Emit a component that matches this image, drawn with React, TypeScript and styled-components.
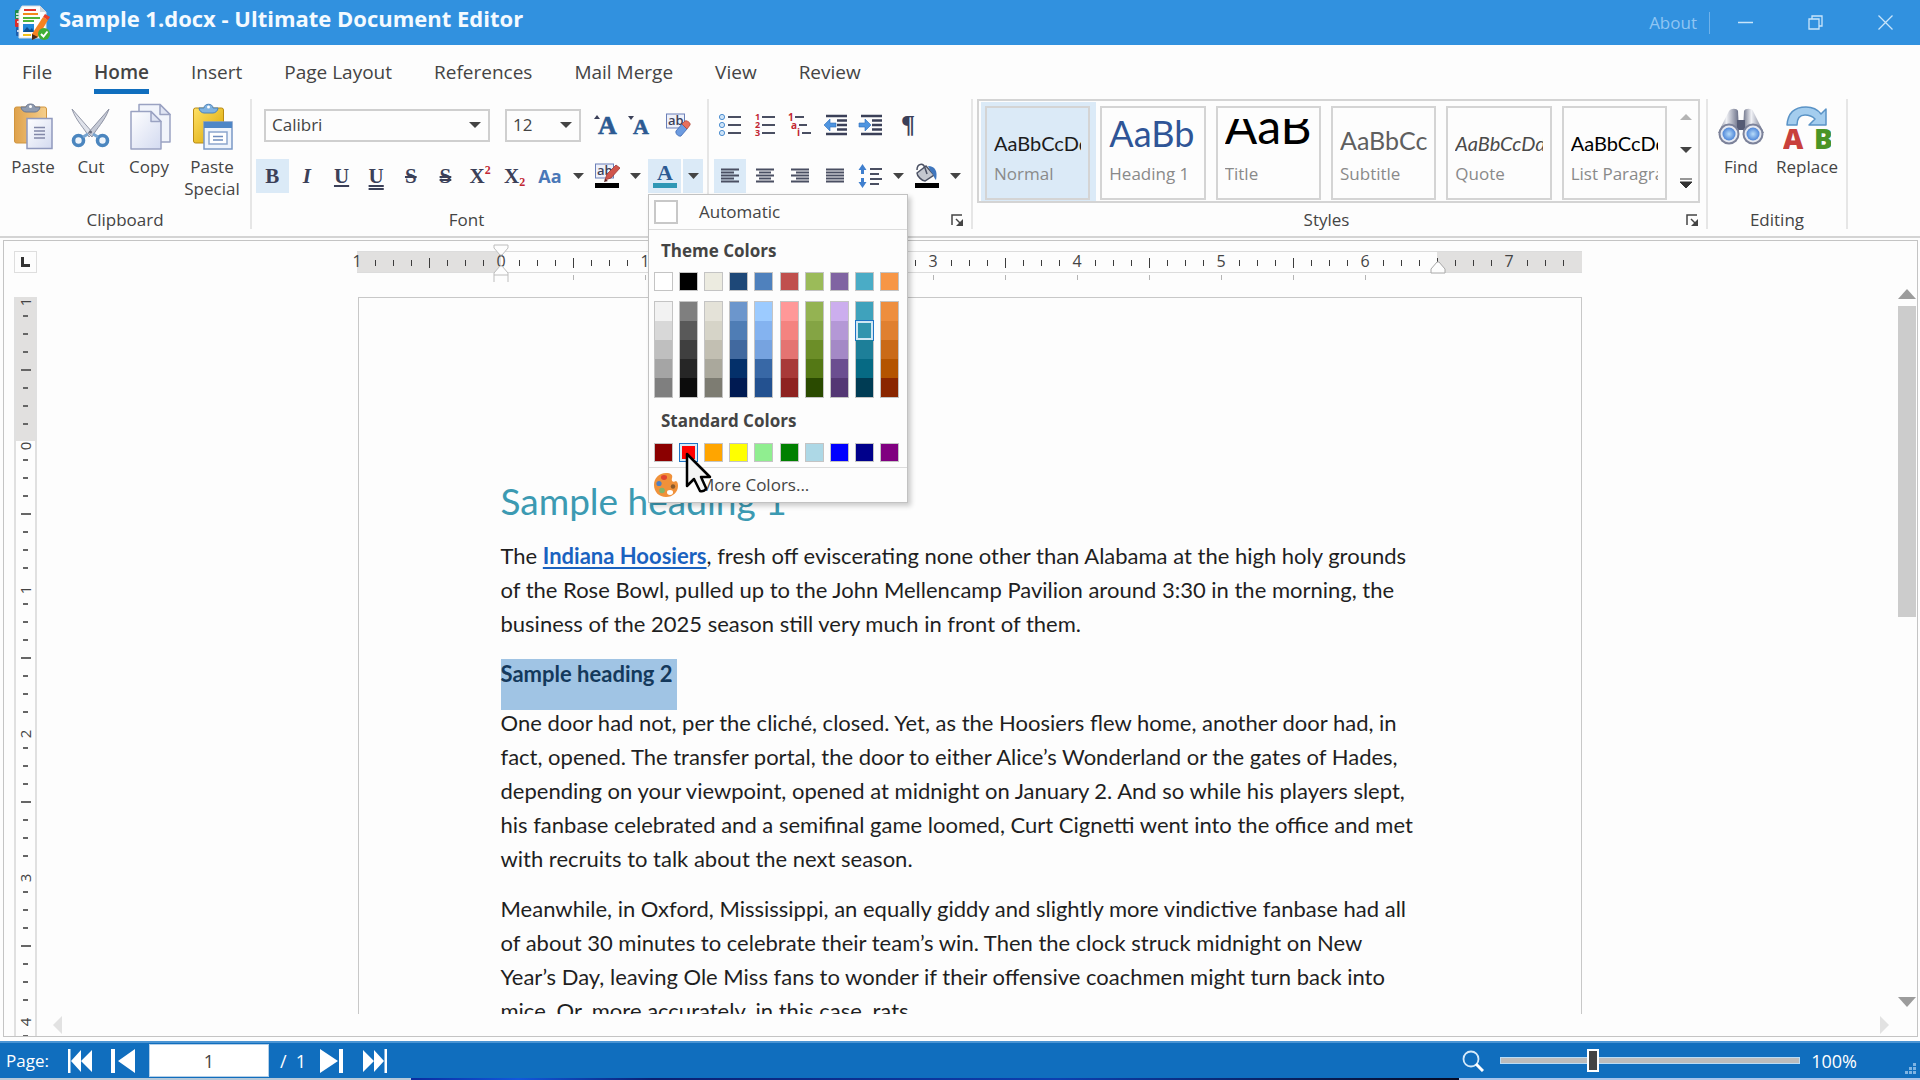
import React from "react";
import styled, { createGlobalStyle } from "styled-components";

const ui = `"Open Sans", "Noto Sans", sans-serif`;
const doc = `Lato, "Open Sans", sans-serif`;
const serif = `"Liberation Serif", serif`;

const color = {
  title: "#3191df",
  accent: "#106ebe",
  text: "#444444",
  line: "#d4d4d4",
  soft: "#e6e6e6",
  active: "#dbeaf7",
  icon: "#3b4058",
};

const GlobalStyle = createGlobalStyle`
  * { box-sizing: border-box; }
  body { margin: 0; background: #fdfdfd; overflow: hidden; }
  button, select, input { font: inherit; color: inherit; margin: 0; padding: 0; border: 0; background: none; }
  svg { display: block; flex: none; }
`;

const Window = styled.div`
  display: flex;
  flex-direction: column;
  height: 100vh;
  font-family: ${ui};
  font-size: 17px;
  line-height: 22px;
  color: ${color.text};
  white-space: nowrap;
`;

/* ---------- title bar ---------- */

const TitleBar = styled.header`
  display: flex;
  align-items: center;
  height: 45px;
  flex: none;
  padding-left: 14px;
  background: ${color.title};
`;

const AppTitle = styled.h1`
  flex: 1;
  margin: 0;
  padding: 0 0 10px 9px;
  font-size: 22px;
  line-height: 28px;
  font-weight: 700;
  color: #f4faff;
`;

const AboutButton = styled.button`
  height: 22px;
  padding: 0 12px;
  border-right: 1px solid #6fb2ea;
  color: #8fc5f3;
`;

const CaptionButton = styled.button`
  display: grid;
  place-items: center;
  width: 70px;
  height: 44px;
`;

/* ---------- tabs ---------- */

const TabBar = styled.nav`
  display: flex;
  gap: 42px;
  height: 50px;
  flex: none;
  padding: 11px 22px 0;
  font-size: 19px;
`;

const Tab = styled.button<{ $current?: boolean }>`
  height: 38px;
  padding-bottom: 2px;
  border-bottom: 5px solid ${(p) => (p.$current ? color.accent : "transparent")};
  font-weight: ${(p) => (p.$current ? 600 : 400)};
`;

/* ---------- ribbon ---------- */

const Ribbon = styled.div`
  display: flex;
  flex: none;
  padding: 4px 0 7px;
  border-bottom: 2px solid ${color.line};
`;

const Group = styled.section<{ $width: number }>`
  display: flex;
  flex-direction: column;
  width: ${(p) => p.$width}px;
  height: 130px;
  border-right: 2px solid ${color.soft};
`;

const GroupBody = styled.div<{ $pad?: string }>`
  flex: 1;
  padding: ${(p) => p.$pad ?? "0"};
`;

const GroupFoot = styled.footer`
  display: flex;
  align-items: center;
  height: 18px;
  line-height: 18px;
`;

const GroupName = styled.span`
  flex: 1;
  text-align: center;
`;

const Launcher = styled.button`
  width: 26px;
  height: 14px;
  padding-left: 6px;
`;

const BigRow = styled.div`
  display: flex;
  align-items: flex-start;
`;

const BigButton = styled.button<{ $width: number }>`
  display: flex;
  flex-direction: column;
  align-items: center;
  gap: 5px;
  width: ${(p) => p.$width}px;
  white-space: normal;
`;

const ToolRow = styled.div<{ $gap: number; $top?: number; $left?: number }>`
  display: flex;
  align-items: center;
  gap: ${(p) => p.$gap}px;
  height: 34px;
  margin-top: ${(p) => p.$top ?? 0}px;
  padding-left: ${(p) => p.$left ?? 0}px;
`;

const SizeTools = styled.div`
  display: flex;
  margin-left: -6px;
`;

const ToggleGrid = styled.div`
  display: grid;
  grid-template-columns: repeat(8, 1fr);
  column-gap: 2px;
  width: 275px;
`;

const Tool = styled.button<{ $active?: boolean; $width?: number }>`
  display: grid;
  place-items: center;
  width: ${(p) => (p.$width ? p.$width + "px" : "auto")};
  height: 34px;
  background: ${(p) => (p.$active ? color.active : "transparent")};
`;

const Glyph = styled.span<{ $italic?: boolean; $line?: string; $big?: boolean }>`
  font: ${(p) => (p.$italic ? "italic" : "normal")} bold ${(p) => (p.$big ? 26 : 21)}px/24px ${serif};
  color: ${color.icon};
  text-decoration: ${(p) => p.$line ?? "none"};
  text-decoration-thickness: ${(p) => (p.$line?.includes("double") ? "auto" : "2px")};
  text-underline-offset: 2px;
`;

const Script = styled.span<{ $low?: boolean }>`
  font-size: 12px;
  line-height: 10px;
  color: #c22733;
  vertical-align: ${(p) => (p.$low ? "-3px" : "9px")};
`;

const CaseGlyph = styled.span`
  font: bold 18px/24px "Open Sans", sans-serif;
  color: #4a78b8;
`;

const Split = styled.div`
  position: relative;
  display: flex;
  gap: 2px;
`;

const Combo = styled.label<{ $width: number }>`
  display: grid;
  align-items: center;
  width: ${(p) => p.$width}px;
  height: 33px;
  border: 2px solid #cfcfcf;

  select, svg { grid-area: 1 / 1; }
  select { appearance: none; height: 29px; padding-left: 6px; outline: none; font-size: 17px; }
  svg { justify-self: end; margin-right: 7px; pointer-events: none; }
`;

/* ---------- style gallery ---------- */

const Gallery = styled.div`
  display: flex;
  width: 723px;
  height: 104px;
  margin-left: 4px;
  border: 2px solid ${color.line};
`;

const GalleryItems = styled.div`
  flex: 1;
  display: grid;
  grid-template-columns: repeat(6, minmax(0, 1fr));
  padding: 1px 0 0 2px;
`;

const StyleCard = styled.button<{ $active?: boolean }>`
  padding: 4px 6px 1px 4px;
  background: ${(p) => (p.$active ? color.active : "transparent")};
  text-align: left;
`;

const StyleFrame = styled.span`
  display: block;
  height: 94px;
  padding: 11px 7px 0;
  border: 2px solid ${color.line};
`;

const Sample = styled.span<{ $size: number; $color: string; $italic?: boolean }>`
  display: flex;
  align-items: flex-end;
  height: 36px;
  overflow: hidden;
  font-family: ${doc};
  font-size: ${(p) => p.$size}px;
  line-height: 1.2;
  font-style: ${(p) => (p.$italic ? "italic" : "normal")};
  color: ${(p) => p.$color};
`;

const StyleName = styled.span`
  display: block;
  margin-top: 8px;
  overflow: hidden;
  color: #8a8a8a;
`;

const GalleryNav = styled.div`
  display: flex;
  flex-direction: column;
  width: 25px;
  padding-bottom: 2px;

  button { flex: 1; display: grid; place-items: center; }
`;

/* ---------- colour menu ---------- */

const Menu = styled.div`
  position: absolute;
  z-index: 5;
  left: 0;
  top: 35px;
  width: 260px;
  border: 1px solid #c2c2c2;
  background: #fdfdfd;
  box-shadow: 3px 3px 5px rgba(0, 0, 0, 0.2);
`;

const MenuRow = styled.button<{ $rule: "top" | "bottom" }>`
  display: flex;
  align-items: center;
  gap: 21px;
  width: 100%;
  height: 35px;
  padding-left: 5px;
  border-${(p) => p.$rule}: 1px solid #dcdcdc;
`;

const AutoBox = styled.span`
  width: 24px;
  height: 24px;
  border: 2px solid #c8c8c8;
  background: #ffffff;
`;

const MenuTitle = styled.h2<{ $height: number }>`
  margin: 0;
  padding-left: 12px;
  height: ${(p) => p.$height}px;
  line-height: ${(p) => p.$height}px;
  font-size: 17px;
  font-weight: 700;
`;

const Swatches = styled.div<{ $below: number }>`
  display: flex;
  justify-content: space-between;
  padding: 0 8px 0 5px;
  margin-bottom: ${(p) => p.$below}px;
`;

const Swatch = styled.button<{ $fill: string; $picked?: boolean }>`
  width: 19px;
  height: 19px;
  border: ${(p) => (p.$picked ? "1px solid #1f74c4" : "1px solid #c4c4c4")};
  box-shadow: ${(p) => (p.$picked ? "inset 0 0 0 2px #d7ebf7" : "none")};
  background: ${(p) => p.$fill};
`;

const Shades = styled.div`
  display: flex;
  flex-direction: column;
  width: 19px;
  border: 1px solid #c4c4c4;
`;

const Shade = styled.button<{ $fill: string; $picked?: boolean }>`
  height: 19px;
  background: ${(p) => p.$fill};
  outline: ${(p) => (p.$picked ? "1px solid #1f74c4" : "none")};
  box-shadow: ${(p) => (p.$picked ? "inset 0 0 0 2px #cfe6f3" : "none")};
`;

const Pointer = styled.svg`
  position: absolute;
  left: 36px;
  top: 257px;
`;

/* ---------- workspace ---------- */

const Workspace = styled.main`
  display: flex;
  flex: 1;
  min-height: 0;
  margin: 2px 2px 4px 3px;
  padding: 0 1px 0 10px;
  border: 1px solid #c4c4c4;
  overflow: hidden;
`;

const Side = styled.div`
  display: flex;
  flex-direction: column;
  gap: 24px;
  width: 23px;
  margin-right: 4px;
  padding-top: 10px;
`;

const TabKind = styled.button`
  display: grid;
  place-items: center;
  flex: none;
  height: 22px;
  border: 1px solid #dedede;
`;

const VRuler = styled.div`
  flex: 1;
  min-height: 0;
  overflow: hidden;
  border: solid #e0e0e0;
  border-width: 0 2px;
  background: linear-gradient(#e1e0df 144px, #fdfdfd 144px);
`;

const VTicks = styled.div`
  margin-top: -8px;
`;

const VCell = styled.div`
  display: grid;
  place-items: center;
  height: 18px;
`;

const VNumber = styled.span`
  padding-right: 8px;
  font-size: 15px;
  line-height: 18px;
  transform: rotate(-90deg);
`;

const VTick = styled.i<{ $long?: boolean }>`
  width: ${(p) => (p.$long ? 10 : 5)}px;
  height: 2px;
  background: #666666;
`;

const Center = styled.div`
  flex: 1;
  display: flex;
  flex-direction: column;
  align-items: center;
  padding-top: 10px;
  min-width: 0;
`;

const HRuler = styled.div`
  position: relative;
  flex: none;
  width: 1225px;
  height: 46px;
`;

const HScale = styled.div`
  display: flex;
  height: 22px;
  border: solid #dcdcdc;
  border-width: 1px 0;
  background: linear-gradient(90deg, #e1e0df 144px, #fdfdfd 144px, #fdfdfd 1080px, #e1e0df 1080px);
`;

const HTicks = styled.div`
  display: flex;
  margin-left: -9px;
`;

const HCell = styled.div`
  display: grid;
  place-items: center;
  width: 18px;
  height: 18px;
`;

const HNumber = styled.span`
  font-size: 16px;
  line-height: 18px;
`;

const HTick = styled.i<{ $long?: boolean }>`
  width: 1px;
  height: ${(p) => (p.$long ? 10 : 6)}px;
  margin-top: 4px;
  background: #3c3c3c;
`;

const TabStops = styled.div`
  display: flex;
  padding: 2px 0 0 145px;

  i { width: 72px; height: 5px; border-right: 1px solid #b4b4b4; }
`;

const Indent = styled.svg<{ $left: number; $top: number }>`
  position: absolute;
  left: ${(p) => p.$left}px;
  top: ${(p) => p.$top}px;
`;

const Viewport = styled.div`
  flex: 1;
  min-height: 0;
  overflow: hidden;
`;

const Page = styled.article`
  width: 1224px;
  height: 1584px;
  padding: 182px 100px 0 142px;
  border: 1px solid #c8c8c8;
  font-family: ${doc};
  font-size: 22px;
  line-height: 34px;
  color: #1f1f1f;

  a { color: #1a62c0; font-weight: 700; text-decoration-thickness: 2px; text-underline-offset: 3px; }
`;

const Heading1 = styled.h1`
  margin: 0 0 17px;
  font-size: 37px;
  line-height: 42px;
  font-weight: 400;
  color: #3c9ab2;
`;

const Paragraph = styled.p`
  margin: 0 0 16px;
`;

const Line = styled.span`
  display: block;
`;

const Heading2 = styled.h2`
  width: fit-content;
  height: 51px;
  margin: 18px 0 -4px;
  padding-right: 4px;
  background: #a0c4e4;
  font-size: 22px;
  line-height: 29px;
  font-weight: 700;
  color: #14395c;
`;

const HScroll = styled.div`
  display: flex;
  justify-content: space-between;
  align-items: center;
  align-self: stretch;
  height: 22px;
  padding: 0 9px 0 12px;
`;

const VScroll = styled.div`
  display: flex;
  flex-direction: column;
  width: 18px;
  padding: 48px 0 29px;
`;

const ScrollTrack = styled.div`
  flex: 1;
  padding: 7px 0;
`;

const ScrollThumb = styled.div`
  height: 45.5%;
  background: #cccccc;
`;

/* ---------- status bar ---------- */

const StatusBar = styled.footer`
  display: flex;
  align-items: center;
  flex: none;
  height: 37px;
  border-top: 2px solid #4b95d4;
  background: ${color.accent};
  color: #ffffff;
  font-size: 18px;
`;

const StatusText = styled.span<{ $pad: string }>`
  padding: ${(p) => p.$pad};
`;

const PageLabel = styled.label`
  padding: 0 18px 0 6px;
  font-size: 17px;
`;

const NavButton = styled.button<{ $gap: number }>`
  width: 26px;
  height: 26px;
  margin-right: ${(p) => p.$gap}px;
`;

const PageInput = styled.input`
  width: 120px;
  height: 33px;
  border: 1px solid #b4cfe8;
  background: #ffffff;
  color: ${color.text};
  text-align: center;
`;

const Spacer = styled.div`
  flex: 1;
`;

const ZoomRange = styled.input`
  appearance: none;
  width: 300px;
  height: 24px;
  margin: 0 11px 0 16px;

  &::-webkit-slider-runnable-track {
    height: 7px;
    border: 1px solid #b9dcf6;
    background: #bcbcbc;
  }
  &::-webkit-slider-thumb {
    appearance: none;
    width: 12px;
    height: 23px;
    margin-top: -9px;
    border: 2px solid #ffffff;
    background: #444444;
  }
`;

const Grip = styled.svg`
  align-self: flex-end;
  margin: 0 4px 4px 0;
`;

const Desktop = styled.div`
  flex: none;
  height: 2px;
  background: linear-gradient(90deg, #b7c9d9 0 21.4%, #0a2a9c 21.4%, #1257dd 27%, #0a1f70 34%, #0d3fb0 55%, #050a24 76%, #a9c4ea 76%);
`;

/* ---------- icons ---------- */

const Caret = ({ fill = "#444444", w = 10, h = 6, up = false }) => (
  <svg width={w} height={h} viewBox="0 0 10 6" preserveAspectRatio="none">
    <path d={up ? "M0 6H10L5 0Z" : "M0 0H10L5 6Z"} fill={fill} />
  </svg>
);

const AppLogo = () => (
  <svg width="36" height="36" viewBox="0 0 36 36">
    <rect x="1" y="5" width="8" height="9" rx="1" fill="#1d8a4a" />
    <rect x="1" y="14" width="8" height="8" rx="1" fill="#d92b2b" />
    <rect x="2" y="22" width="9" height="9" rx="1" fill="#1d5fae" />
    <path d="M2 9h4M2 12h4M3 17h3M3 26h4" stroke="#fff" strokeWidth="1.3" />
    <path d="M8 1h18l6 6v26H5V6z" fill="#fdfdfd" stroke="#d8dde2" />
    <path d="M26 1l6 6h-6z" fill="#cfd6dc" />
    <path d="M10 5h12" stroke="#e0332c" strokeWidth="2" />
    <path d="M9 9h15" stroke="#f28a1c" strokeWidth="2" />
    <path d="M9 13h17M9 16h11" stroke="#4fb53c" strokeWidth="2" />
    <rect x="9" y="19" width="11" height="8" fill="#2389d8" />
    <path d="M9 27l4-5 3 3 2-2 2 4z" fill="#0d4e8f" />
    <path d="M9 30h8" stroke="#f2c21c" strokeWidth="2" />
    <path d="M18 29L29 12l5 3-10 17-6 3z" fill="#f58220" />
    <path d="M29 12l2-3 5 3-2 3z" fill="#e8402a" />
    <path d="M18 29l6 3-6 3z" fill="#4a2a18" />
    <circle cx="30" cy="29" r="6" fill="#3fae35" />
    <path d="M27 29l2.500 2.500 4-5" fill="none" stroke="#fff" strokeWidth="2" />
  </svg>
);

const PasteIcon = () => (
  <svg width="48" height="48" viewBox="0 0 48 48">
    <defs>
      <linearGradient id="board" x2="1"><stop stopColor="#dfa24c" /><stop offset="1" stopColor="#f6cf8c" /></linearGradient>
      <linearGradient id="sheet" x2="1" y2="1"><stop stopColor="#ffffff" /><stop offset="1" stopColor="#d3daf0" /></linearGradient>
    </defs>
    <rect x="5.500" y="4" width="32" height="36" rx="2" fill="url(#board)" stroke="#d0953f" />
    <path d="M12 4h5c0-4 9-4 9 0h5c0 3-3 5-5 5h-9c-2 0-5-2-5-5z" fill="#8f9bb0" stroke="#6d7890" />
    <circle cx="21.500" cy="3.500" r="1.500" fill="#fff" />
    <rect x="18" y="15.500" width="25" height="30" fill="url(#sheet)" stroke="#9099bd" strokeWidth="1.500" />
    <path d="M25 24.500h11M25 28h11M25 31.500h11M25 35h11" stroke="#8288a8" strokeWidth="1.500" />
  </svg>
);

const CutIcon = () => (
  <svg width="48" height="48" viewBox="0 0 48 48">
    <path d="M5 6l21 24-4 4C18 26 9 18 5 6z" fill="#dfe2ea" stroke="#9398a8" />
    <path d="M42 6L21 30l4 4C29 26 38 18 42 6z" fill="#c6cad6" stroke="#8d92a3" />
    <circle cx="23.500" cy="29" r="1.500" fill="#676d80" />
    <circle cx="11.500" cy="37.500" r="5" fill="#eef4fb" stroke="#4b86bf" strokeWidth="3.600" />
    <circle cx="35.500" cy="37.500" r="5" fill="#eef4fb" stroke="#4b86bf" strokeWidth="3.600" />
    <path d="M16 34l5-3M31 34l-5-3" stroke="#79a5d0" strokeWidth="3" />
  </svg>
);

const CopyIcon = () => (
  <svg width="48" height="48" viewBox="0 0 48 48">
    <g stroke="#9aa2c2" strokeWidth="1.500" strokeLinejoin="round">
      <path d="M14 1.500h21l10 10V39H14z" fill="#f1f4fb" />
      <path d="M35 1.500v10h10z" fill="#dfe4f3" />
      <path d="M6 8.500h20l10 10V46H6z" fill="url(#sheet)" />
      <path d="M26 8.500v10h10z" fill="#dfe4f3" />
    </g>
  </svg>
);

const PasteSpecialIcon = () => (
  <svg width="48" height="48" viewBox="0 0 48 48">
    <defs>
      <linearGradient id="gold" x2="1" y2="1"><stop stopColor="#ffe166" /><stop offset="1" stopColor="#d9a400" /></linearGradient>
    </defs>
    <rect x="5.500" y="5" width="30" height="35" rx="2" fill="url(#gold)" stroke="#b98a12" />
    <path d="M11 5h5c0-5 9-5 9 0h5c0 3-3 5-5 5h-9c-2 0-5-2-5-5z" fill="#7fb2e0" stroke="#4d82b8" />
    <circle cx="20.500" cy="4" r="1.500" fill="#fff" />
    <rect x="16" y="19" width="28" height="27" fill="#eef4fc" stroke="#7a98c6" strokeWidth="1.500" />
    <rect x="16" y="19" width="28" height="6" fill="#4e86c6" />
    <rect x="21" y="29" width="18" height="12" fill="#fff" stroke="#8da6cd" strokeWidth="1.500" />
    <path d="M25 33.500h10M25 37h10" stroke="#6f8dbd" strokeWidth="1.500" />
  </svg>
);

const FindIcon = () => (
  <svg width="48" height="48" viewBox="0 0 48 48">
    <defs>
      <linearGradient id="tube" x2="1"><stop stopColor="#6d7389" /><stop offset=".4" stopColor="#f0f1f5" /><stop offset="1" stopColor="#666c84" /></linearGradient>
      <radialGradient id="lens"><stop stopColor="#b8dcfa" /><stop offset="1" stopColor="#4e86d8" /></radialGradient>
    </defs>
    <path d="M12 8c2-3 8-3 9 0l1 20-21 2z" fill="url(#tube)" />
    <path d="M27 8c1-3 8-3 9 0l11 22-21-2z" fill="url(#tube)" />
    <rect x="20" y="17" width="8" height="10" fill="#555b74" />
    <circle cx="12" cy="31" r="10.500" fill="#7c829a" />
    <circle cx="12" cy="31" r="8.500" fill="#e6e9f1" />
    <circle cx="12" cy="31" r="6.500" fill="url(#lens)" />
    <circle cx="36" cy="31" r="10.500" fill="#7c829a" />
    <circle cx="36" cy="31" r="8.500" fill="#e6e9f1" />
    <circle cx="36" cy="31" r="6.500" fill="url(#lens)" />
  </svg>
);

const ReplaceIcon = () => (
  <svg width="48" height="48" viewBox="0 0 48 48">
    <path d="M4 22C5 9 13 4 23 4c7 0 12 3 15 7l5-5v16H26l6-6c-3-3-6-4-10-4-6 0-8 4-8 10z" fill="#a4cdee" stroke="#5a93c6" strokeWidth="1.500" strokeLinejoin="round" />
    <text x="0" y="46" fontFamily="Open Sans" fontWeight="800" fontSize="28" fill="#c8403c">A</text>
    <text x="31" y="46" fontFamily="Open Sans" fontWeight="800" fontSize="28" fill="#4a9426">B</text>
  </svg>
);

const SizeGlyph = ({ size, up }: { size: number; up?: boolean }) => (
  <svg width="26" height="24" viewBox="0 0 26 24">
    <path d={up ? "M0 6h6L3 2z" : "M0 3h6L3 7z"} fill="#3b4058" />
    <text x={up ? 4 : 5} y="21" fontFamily="Liberation Serif" fontWeight="bold" fontSize={size} fill="#2c5a92" stroke="#2c5a92" strokeWidth=".6">A</text>
  </svg>
);

const AbCard = ({ pen }: { pen?: boolean }) => (
  <svg width="26" height="26" viewBox="0 0 26 26">
    <rect x="1.500" y={pen ? 1 : 2} width="18" height="14" fill="#eef1fa" stroke="#6a7fb8" />
    <text x="3" y={pen ? 12 : 13} fontFamily="Open Sans" fontWeight="600" fontSize="13" fill="#3b4058">ab</text>
    {pen ? (
      <>
        <path d="M11 17l2-6 9-9 4 3-9 10z" fill="#d0554c" stroke="#9d3a36" strokeWidth=".8" />
        <path d="M10 19l1-3 3 2z" fill="#5a2020" />
        <rect x="1" y="20" width="24" height="5" fill="#000" />
      </>
    ) : (
      <>
        <path d="M11 19l6-7 5 5-6 7c-2 1-6-2-5-5z" fill="#6c9be0" stroke="#3d67b0" strokeWidth=".8" />
        <path d="M17 12l3-3c2-1 6 2 5 4l-3 4z" fill="#e8705c" stroke="#b04a3c" strokeWidth=".8" />
      </>
    )}
  </svg>
);

const FontColorIcon = () => (
  <svg width="26" height="26" viewBox="0 0 26 26">
    <text x="13" y="17" textAnchor="middle" fontFamily="Liberation Serif" fontWeight="bold" fontSize="22" fill="#2c5a92">A</text>
    <rect x="1" y="20" width="24" height="5" fill="#2f97b5" />
  </svg>
);

const BucketIcon = () => (
  <svg width="26" height="26" viewBox="0 0 26 26">
    <path d="M3 10l9-7 8 9-9 6c-3 0-8-5-8-8z" fill="#c3c7cf" stroke="#4c5264" strokeWidth="1.500" />
    <path d="M3 7c0-6 6-8 8-2l2 6" fill="none" stroke="#4c5264" strokeWidth="1.500" />
    <path d="M14 3c7 0 10 5 8 14-3-3-2-6-5-8z" fill="#3f76bd" />
    <rect x="1" y="20" width="24" height="5" fill="#000" />
  </svg>
);

const rows = (ys: number[], x1: number, x2: number) => ys.map((y) => `M${x1} ${y}H${x2}`).join("");

const BulletIcon = () => (
  <svg width="24" height="24" viewBox="0 0 24 24">
    {[4, 12, 20].map((y) => <circle key={y} cx="4" cy={y} r="2.600" fill="#cfe4f8" stroke="#4f8fd0" />)}
    <path d={rows([4, 12, 20], 10, 23)} stroke="#4a4f62" strokeWidth="2" />
  </svg>
);

const numStyle = { fontFamily: "Open Sans", fontWeight: 700, fill: "#c22733" };

const NumberIcon = () => (
  <svg width="24" height="24" viewBox="0 0 24 24">
    <g {...numStyle} fontSize="9">
      <text x="2" y="7">1</text><text x="2" y="15">2</text><text x="2" y="23">3</text>
    </g>
    <path d={rows([4, 12, 20], 9, 22)} stroke="#4a4f62" strokeWidth="2" />
  </svg>
);

const MultiIcon = () => (
  <svg width="24" height="24" viewBox="0 0 24 24">
    <g {...numStyle} fontSize="10">
      <text x="0" y="8">1</text><text x="3" y="16">a</text><text x="9" y="23">i</text>
    </g>
    <path d="M7 4H16M11 12H19M14 20H23" stroke="#4a4f62" strokeWidth="2" />
  </svg>
);

const IndentIcon = ({ out }: { out?: boolean }) => (
  <svg width="24" height="24" viewBox="0 0 24 24">
    <path d="M3 3H24M14 7.500H24M14 12H24M14 16.500H24M3 21H24" stroke="#3b4058" strokeWidth="2.400" />
    <path d={out ? "M1 12l6-6v4h6v4H7v4z" : "M13 12L7 6v4H1v4h6v4z"} fill="#4f95e0" stroke="#2b6cb8" strokeWidth=".6" />
  </svg>
);

const AlignIcon = ({ kind }: { kind: "left" | "center" | "right" | "full" }) => {
  const short = kind === "left" ? [3, 16] : kind === "right" ? [8, 21] : kind === "center" ? [6, 18] : [3, 21];
  return (
    <svg width="24" height="24" viewBox="0 0 24 24">
      <path d={rows([5.5, 11.5, 17.5], 3, 21) + rows([8.5, 14.5], short[0], short[1])} stroke="#4a4f62" strokeWidth="1.800" />
    </svg>
  );
};

const SpacingIcon = () => (
  <svg width="24" height="24" viewBox="0 0 24 24">
    <path d="M4.500 0l4 6H6v4H3V6H.5zM4.500 24l4-6H6v-4H3v4H.5z" fill="#3f7fce" />
    <path d="M12 5H24M12 10H21M12 15H24M12 20H21" stroke="#4a4f62" strokeWidth="2" />
  </svg>
);

const LauncherIcon = () => (
  <svg width="12" height="12" viewBox="0 0 12 12">
    <path d="M1 11V1h10" fill="none" stroke="#444" strokeWidth="1.500" />
    <path d="M5 5l4 4" stroke="#444" strokeWidth="1.500" />
    <path d="M12 5v7H5z" fill="#444" />
  </svg>
);

const PaletteIcon = () => (
  <svg width="24" height="24" viewBox="0 0 24 24">
    <path d="M12 0c5 0 7 2 6 5s1 5 4 3c2 1 2 4 2 5 0 6-5 11-12 11S0 19 0 12 5 0 12 0z" fill="#f0913a" />
    <ellipse cx="10" cy="4.500" rx="3" ry="2.400" fill="#e0452f" />
    <circle cx="5" cy="10.500" r="2.600" fill="#4f7fc0" />
    <circle cx="8" cy="17.500" r="2.800" fill="#84b468" />
    <ellipse cx="16" cy="19.500" rx="3" ry="2.400" fill="#fff" />
    <circle cx="19" cy="13.500" r="2.200" fill="#8a5a2c" />
  </svg>
);

const first = "M1 1h2.500v24H1zM14 2v22L4 13zM25 2v22L14 13z";
const last = "M25 1h-2.500v24H25zM12 2v22l10-11zM1 2v22l11-11z";
const prev = "M1 1h4v24H1zM25 1v24L8 13z";
const next = "M24 1h-4v24h4zM1 1v24l18-12z";

/* ---------- data ---------- */

const themeBase = ["#ffffff", "#000000", "#ecebe0", "#1e4878", "#4f81bd", "#c0504d", "#9bbb59", "#8064a2", "#4aacc6", "#f79646"];

const themeShades = [
  ["#f2f2f2", "#d8d8d8", "#bfbfbf", "#a5a5a5", "#7f7f7f"],
  ["#7f7f7f", "#595959", "#3f3f3f", "#262626", "#0c0c0c"],
  ["#e4e2d8", "#d6d4c8", "#c2bfb2", "#aaa89c", "#7d7c72"],
  ["#6c96cc", "#4f7db5", "#41699f", "#04306a", "#001a52"],
  ["#9ccbff", "#84b3f0", "#76a3e0", "#3868a6", "#235190"],
  ["#ff9898", "#f48380", "#e47472", "#a83a38", "#8e2220"],
  ["#94b352", "#84a444", "#6c8e28", "#547815", "#2a4a00"],
  ["#ccaeee", "#b498d6", "#a489c6", "#6b4e90", "#543774"],
  ["#3fa2bc", "#3094ae", "#1d7f99", "#066a84", "#003c54"],
  ["#ee8e3e", "#e08030", "#ca6a18", "#b45400", "#8a2600"],
];

const standard = ["#8b0000", "#ff0000", "#ffa500", "#ffff00", "#90ee90", "#008000", "#add8e6", "#0000ff", "#00008b", "#800080"];

const tabs = ["File", "Home", "Insert", "Page Layout", "References", "Mail Merge", "View", "Review"];

const cards = [
  { name: "Normal", text: "AaBbCcDd", size: 20, color: "#1c1c1c" },
  { name: "Heading 1", text: "AaBb", size: 36, color: "#2f5597" },
  { name: "Title", text: "AaBb", size: 48, color: "#000000" },
  { name: "Subtitle", text: "AaBbCc", size: 25, color: "#5f5f5f" },
  { name: "Quote", text: "AaBbCcDd", size: 20, color: "#4a4a4a", italic: true },
  { name: "List Paragraph", text: "AaBbCcDd", size: 20, color: "#000000" },
];

const second = [
  "One door had not, per the cliché, closed. Yet, as the Hoosiers flew home, another door had, in",
  "fact, opened. The transfer portal, the door to either Alice’s Wonderland or the gates of Hades,",
  "depending on your viewpoint, opened at midnight on January 2. And so while his players slept,",
  "his fanbase celebrated and a semifinal game loomed, Curt Cignetti went into the office and met",
  "with recruits to talk about the next season.",
];

const third = [
  "Meanwhile, in Oxford, Mississippi, an equally giddy and slightly more vindictive fanbase had all",
  "of about 30 minutes to celebrate their team’s win. Then the clock struck midnight on New",
  "Year’s Day, leaving Ole Miss fans to wonder if their offensive coachmen might turn back into",
  "mice. Or, more accurately, in this case, rats.",
];

const steps = (n: number) => Array.from({ length: n }, (_, i) => i);
const inch = (i: number) => Math.abs(i / 8 - 1);

/* ---------- sections ---------- */

const Foot = ({ name, launcher }: { name: string; launcher?: boolean }) => (
  <GroupFoot>
    <GroupName>{name}</GroupName>
    {launcher && <Launcher aria-label={`${name} settings`}><LauncherIcon /></Launcher>}
  </GroupFoot>
);

const Drop = ({ active, label }: { active?: boolean; label: string }) => (
  <Tool $width={20} $active={active} aria-label={label}><Caret w={11} /></Tool>
);

const ColorMenu = () => (
  <Menu role="menu">
    <MenuRow $rule="bottom"><AutoBox />Automatic</MenuRow>
    <MenuTitle $height={42}>Theme Colors</MenuTitle>
    <Swatches $below={10}>
      {themeBase.map((c) => <Swatch key={c} $fill={c} aria-label={c} />)}
    </Swatches>
    <Swatches $below={0}>
      {themeShades.map((column, i) => (
        <Shades key={i}>
          {column.map((c) => <Shade key={c} $fill={c} $picked={c === "#3094ae"} aria-label={c} />)}
        </Shades>
      ))}
    </Swatches>
    <MenuTitle $height={45}>Standard Colors</MenuTitle>
    <Swatches $below={5}>
      {standard.map((c) => <Swatch key={c} $fill={c} $picked={c === "#ff0000"} aria-label={c} />)}
    </Swatches>
    <MenuRow $rule="top"><PaletteIcon />More Colors...</MenuRow>
    <Pointer width="28" height="42" viewBox="0 0 28 42">
      <path d="M2 2v32l7-7 6 12c3 1 6-1 6-3l-5-11h9z" fill="#f4f4f4" stroke="#000" strokeWidth="2.500" strokeLinejoin="round" />
    </Pointer>
  </Menu>
);

const RibbonBar = () => (
  <Ribbon>
    <Group $width={252}>
      <GroupBody $pad="4px 0 0 4px">
        <BigRow>
          <BigButton $width={58}><PasteIcon />Paste</BigButton>
          <BigButton $width={58}><CutIcon />Cut</BigButton>
          <BigButton $width={58}><CopyIcon />Copy</BigButton>
          <BigButton $width={68}><PasteSpecialIcon />Paste Special</BigButton>
        </BigRow>
      </GroupBody>
      <Foot name="Clipboard" />
    </Group>

    <Group $width={457}>
      <GroupBody $pad="9px 0 0 4px">
        <ToolRow $gap={15} $left={8}>
          <Combo $width={226}>
            <select aria-label="Font" defaultValue="Calibri"><option>Calibri</option></select>
            <Caret w={12} />
          </Combo>
          <Combo $width={76}>
            <select aria-label="Font size" defaultValue="12"><option>12</option></select>
            <Caret w={12} />
          </Combo>
          <SizeTools>
            <Tool $width={34} aria-label="Grow font"><SizeGlyph size={26} up /></Tool>
            <Tool $width={34} aria-label="Shrink font"><SizeGlyph size={22} /></Tool>
            <Tool $width={40} aria-label="Clear formatting"><AbCard /></Tool>
          </SizeTools>
        </ToolRow>
        <ToolRow $gap={3} $top={17}>
          <ToggleGrid>
            <Tool $active><Glyph>B</Glyph></Tool>
            <Tool><Glyph $italic>I</Glyph></Tool>
            <Tool><Glyph $line="underline">U</Glyph></Tool>
            <Tool><Glyph $line="underline double">U</Glyph></Tool>
            <Tool><Glyph $line="line-through">S</Glyph></Tool>
            <Tool><Glyph $line="line-through double">S</Glyph></Tool>
            <Tool><Glyph>X<Script>2</Script></Glyph></Tool>
            <Tool><Glyph>X<Script $low>2</Script></Glyph></Tool>
          </ToggleGrid>
          <Split>
            <Tool $width={32}><CaseGlyph>Aa</CaseGlyph></Tool>
            <Drop label="Case options" />
          </Split>
          <Split>
            <Tool $width={32} aria-label="Highlight"><AbCard pen /></Tool>
            <Drop label="Highlight colors" />
          </Split>
          <Split>
            <Tool $width={33} $active aria-label="Font color"><FontColorIcon /></Tool>
            <Drop label="Font colors" active />
            <ColorMenu />
          </Split>
        </ToolRow>
      </GroupBody>
      <Foot name="Font" launcher />
    </Group>

    <Group $width={264}>
      <GroupBody $pad="9px 0 0 5px">
        <ToolRow $gap={3}>
          <Tool $width={32} aria-label="Bullets"><BulletIcon /></Tool>
          <Tool $width={32} aria-label="Numbering"><NumberIcon /></Tool>
          <Tool $width={32} aria-label="Multilevel list"><MultiIcon /></Tool>
          <Tool $width={32} aria-label="Decrease indent"><IndentIcon out /></Tool>
          <Tool $width={32} aria-label="Increase indent"><IndentIcon /></Tool>
          <Tool $width={38}><Glyph $big>¶</Glyph></Tool>
        </ToolRow>
        <ToolRow $gap={3} $top={17}>
          <Tool $width={32} $active aria-label="Align left"><AlignIcon kind="left" /></Tool>
          <Tool $width={32} aria-label="Center"><AlignIcon kind="center" /></Tool>
          <Tool $width={32} aria-label="Align right"><AlignIcon kind="right" /></Tool>
          <Tool $width={32} aria-label="Justify"><AlignIcon kind="full" /></Tool>
          <Split>
            <Tool $width={32} aria-label="Line spacing"><SpacingIcon /></Tool>
            <Drop label="Line spacing options" />
          </Split>
          <Split>
            <Tool $width={32} aria-label="Shading"><BucketIcon /></Tool>
            <Drop label="Shading colors" />
          </Split>
        </ToolRow>
      </GroupBody>
      <Foot name="" launcher />
    </Group>

    <Group $width={735}>
      <GroupBody>
        <Gallery>
          <GalleryItems>
            {cards.map((c, i) => (
              <StyleCard key={c.name} $active={i === 0}>
                <StyleFrame>
                  <Sample $size={c.size} $color={c.color} $italic={c.italic}>{c.text}</Sample>
                  <StyleName>{c.name}</StyleName>
                </StyleFrame>
              </StyleCard>
            ))}
          </GalleryItems>
          <GalleryNav>
            <button aria-label="Previous styles"><Caret up fill="#b4b4b4" w={12} /></button>
            <button aria-label="Next styles"><Caret w={12} /></button>
            <button aria-label="All styles">
              <svg width="12" height="10" viewBox="0 0 12 10">
                <path d="M0 1H12M0 4H12L6 10Z" fill="#333" stroke="#333" strokeWidth="1" />
              </svg>
            </button>
          </GalleryNav>
        </Gallery>
      </GroupBody>
      <Foot name="Styles" launcher />
    </Group>

    <Group $width={140}>
      <GroupBody $pad="4px 0 0 4px">
        <BigRow>
          <BigButton $width={58}><FindIcon />Find</BigButton>
          <BigButton $width={74}><ReplaceIcon />Replace</BigButton>
        </BigRow>
      </GroupBody>
      <Foot name="Editing" />
    </Group>
  </Ribbon>
);

const DocumentArea = () => (
  <Workspace>
    <Side>
      <TabKind aria-label="Tab stop kind">
        <svg width="9" height="10" viewBox="0 0 9 10"><path d="M1.500 0v8.500H9" fill="none" stroke="#333" strokeWidth="3" /></svg>
      </TabKind>
      <VRuler>
        <VTicks>
          {steps(42).map((i) => (
            <VCell key={i}>
              {i % 8 === 0 ? <VNumber>{inch(i)}</VNumber> : <VTick $long={i % 8 === 4} />}
            </VCell>
          ))}
        </VTicks>
      </VRuler>
    </Side>
    <Center>
      <HRuler>
        <HScale>
          <HTicks>
            {steps(68).map((i) => (
              <HCell key={i}>
                {i % 8 === 0 ? <HNumber>{inch(i)}</HNumber> : <HTick $long={i % 8 === 4} />}
              </HCell>
            ))}
          </HTicks>
        </HScale>
        <TabStops>{steps(12).map((i) => <i key={i} />)}</TabStops>
        <Indent $left={136} $top={-7} width="16" height="38" viewBox="0 0 16 38">
          <path d="M1 1h14v3l-6 7H7L1 4z" fill="#fdfdfd" stroke="#bdbdbd" />
          <path d="M7 22h2l6 7v2H1v-2zM1 31v7M15 31v7" fill="#fdfdfd" stroke="#bdbdbd" />
        </Indent>
        <Indent $left={1073} $top={10} width="16" height="13" viewBox="0 0 16 13">
          <path d="M7 1h2l6 7v4H1V8z" fill="#fdfdfd" stroke="#a8a8a8" />
        </Indent>
      </HRuler>
      <Viewport>
        <Page>
          <Heading1>Sample heading 1</Heading1>
          <Paragraph>
            <Line>The <a href="#hoosiers">Indiana Hoosiers</a>, fresh off eviscerating none other than Alabama at the high holy grounds</Line>
            <Line>of the Rose Bowl, pulled up to the John Mellencamp Pavilion around 3:30 in the morning, the</Line>
            <Line>business of the 2025 season still very much in front of them.</Line>
          </Paragraph>
          <Heading2>Sample heading 2</Heading2>
          <Paragraph>{second.map((l) => <Line key={l}>{l}</Line>)}</Paragraph>
          <Paragraph>{third.map((l) => <Line key={l}>{l}</Line>)}</Paragraph>
        </Page>
      </Viewport>
      <HScroll>
        <svg width="9" height="18" viewBox="0 0 9 18"><path d="M9 0v18L0 9z" fill="#e2e2e2" /></svg>
        <svg width="9" height="18" viewBox="0 0 9 18"><path d="M0 0v18l9-9z" fill="#e2e2e2" /></svg>
      </HScroll>
    </Center>
    <VScroll>
      <Caret up fill="#9c9c9c" w={18} h={10} />
      <ScrollTrack><ScrollThumb /></ScrollTrack>
      <Caret fill="#9c9c9c" w={18} h={10} />
    </VScroll>
  </Workspace>
);

const Nav = ({ d, gap, label }: { d: string; gap: number; label: string }) => (
  <NavButton $gap={gap} aria-label={label}>
    <svg width="26" height="26" viewBox="0 0 26 26"><path d={d} fill="#fff" /></svg>
  </NavButton>
);

const Status = () => (
  <StatusBar>
    <PageLabel htmlFor="page">Page:</PageLabel>
    <Nav d={first} gap={17} label="First page" />
    <Nav d={prev} gap={13} label="Previous page" />
    <PageInput id="page" defaultValue="1" />
    <StatusText $pad="0 13px 0 11px">/&nbsp; 1</StatusText>
    <Nav d={next} gap={17} label="Next page" />
    <Nav d={last} gap={0} label="Last page" />
    <Spacer />
    <svg width="22" height="22" viewBox="0 0 22 22">
      <circle cx="9" cy="9" r="7.500" fill="none" stroke="#d6eaf9" strokeWidth="1.800" />
      <path d="M14 14l7 7" stroke="#fff" strokeWidth="3" />
    </svg>
    <ZoomRange type="range" min="10" max="400" defaultValue="127" aria-label="Zoom" />
    <StatusText $pad="0 48px 0 0">100%</StatusText>
    <Grip width="11" height="11" viewBox="0 0 11 11">
      <path d="M8 0h3v3H8zM4 4h3v3H4zM8 4h3v3H8zM0 8h3v3H0zM4 8h3v3H4zM8 8h3v3H8z" fill="#7fb4e3" />
    </Grip>
  </StatusBar>
);

export default function App() {
  return (
    <Window>
      <GlobalStyle />
      <TitleBar>
        <AppLogo />
        <AppTitle>Sample 1.docx - Ultimate Document Editor</AppTitle>
        <AboutButton>About</AboutButton>
        <CaptionButton aria-label="Minimize">
          <svg width="15" height="15" viewBox="0 0 15 15"><path d="M0 7.500h15" stroke="#c9e5fa" strokeWidth="1.500" /></svg>
        </CaptionButton>
        <CaptionButton aria-label="Restore">
          <svg width="15" height="15" viewBox="0 0 15 15"><path d="M1 4h10v10H1zM4 4V1h10v10h-3" fill="none" stroke="#c9e5fa" strokeWidth="1.300" /></svg>
        </CaptionButton>
        <CaptionButton aria-label="Close">
          <svg width="15" height="15" viewBox="0 0 15 15"><path d="M.5.5l14 14M14.500.5l-14 14" stroke="#c9e5fa" strokeWidth="1.300" /></svg>
        </CaptionButton>
      </TitleBar>
      <TabBar>
        {tabs.map((t) => <Tab key={t} $current={t === "Home"}>{t}</Tab>)}
      </TabBar>
      <RibbonBar />
      <DocumentArea />
      <Status />
      <Desktop />
    </Window>
  );
}
